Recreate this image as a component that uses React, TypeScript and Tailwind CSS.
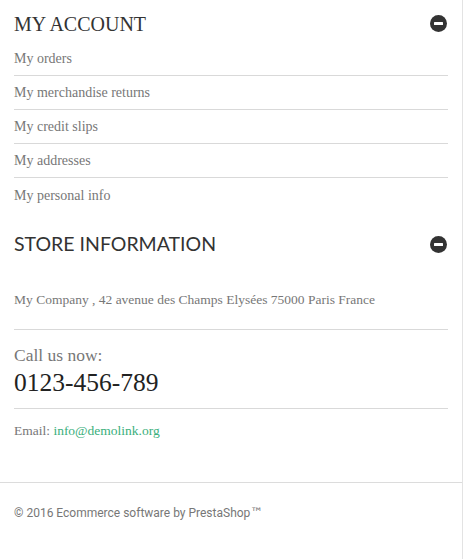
const links = [
    "My orders",
    "My merchandise returns",
    "My credit slips",
    "My addresses",
    "My personal info",
];

function MinusIcon() {
    return (
        <svg width="17" height="17" viewBox="0 0 17 17" className="flex-none">
            <circle cx="8.5" cy="8.5" r="8.5" fill="#333333" />
            <rect x="4" y="7" width="9" height="3" rx="0.5" fill="#ffffff" />
        </svg>
    );
}

export default function App() {
    return (
        <div className="w-[463px] h-[559px] bg-white border-r border-[#e3e3e3] flex flex-col">
            <div className="px-[14px]">
                {/* my account */}
                <div className="h-[42px] pt-[5px] flex items-center justify-between">
                    <h3 className="text-[20px] leading-none text-[#333] font-['Liberation_Serif',serif]">
                        MY ACCOUNT
                    </h3>
                    <div className="pr-[1px]">
                        <MinusIcon />
                    </div>
                </div>
                <ul>
                    {links.map((l, i) => (
                        <li
                            key={l}
                            className={
                                i < links.length - 1
                                    ? "h-[34px] flex items-center border-b border-[#d9d9d9]"
                                    : "h-[34px] flex items-center"
                            }
                        >
                            <a className="text-[14px] text-[#777] font-['Liberation_Serif',serif]">{l}</a>
                        </li>
                    ))}
                </ul>

                {/* store information */}
                <div className="h-[64px] flex items-center justify-between">
                    <h3 className="text-[19.5px] leading-none text-[#333] font-['Lato',sans-serif]">
                        STORE INFORMATION
                    </h3>
                    <div className="pr-[1px]">
                        <MinusIcon />
                    </div>
                </div>
                <div className="pt-[14px] pb-[19px] border-b border-[#d9d9d9]">
                    <p className="text-[13.5px] leading-[20px] text-[#777] font-['Liberation_Serif',serif]">
                        My Company , 42 avenue des Champs Elysées 75000 Paris France
                    </p>
                </div>
                <div className="pt-[15px] pb-[10px] border-b border-[#d9d9d9] font-['Liberation_Serif',serif]">
                    <div className="text-[17.5px] leading-[20px] text-[#777]">Call us now:</div>
                    <div className="text-[25.5px] leading-[30px] text-[#222] mt-[3px]">0123-456-789</div>
                </div>
                <div className="pt-[12px] pb-[41px] font-['Liberation_Serif',serif] text-[13.5px] leading-[20px] text-[#777]">
                    Email: <a className="text-[#3aaf7c]">info@demolink.org</a>
                </div>
            </div>

            {/* footer */}
            <div className="border-t border-[#dcdcdc] px-[14px] pt-[21px]">
                <p className="text-[12px] leading-[18px] text-[#777] font-['Roboto',sans-serif]">
                    © 2016 Ecommerce software by PrestaShop<span className="text-[13px] font-['DejaVu_Sans',sans-serif]">™</span>
                </p>
            </div>
        </div>
    );
}
